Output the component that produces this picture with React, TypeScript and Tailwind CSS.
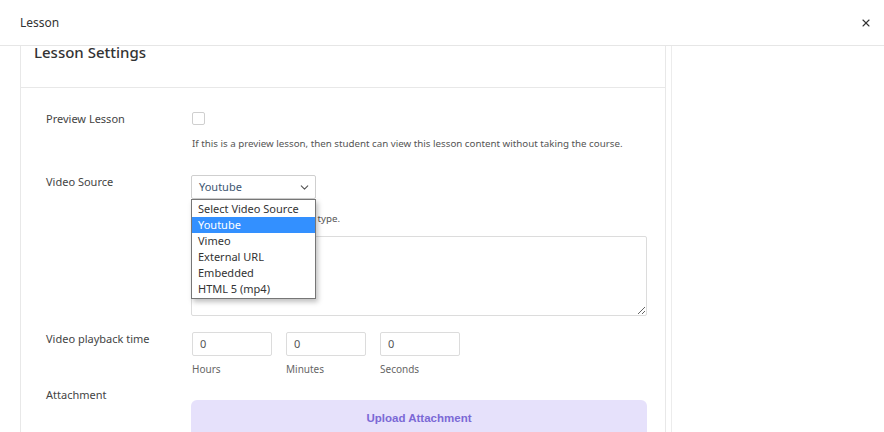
import { X, ChevronDown } from 'lucide-react';

const font = { fontFamily: '"Noto Sans", "Open Sans", sans-serif' };

const options = ['Select Video Source', 'Youtube', 'Vimeo', 'External URL', 'Embedded', 'HTML 5 (mp4)'];

const TimeInput = ({ label }: { label: string }) => (
  <div className="flex flex-col">
    <div className="w-[80px] h-[24px] border border-[#dcdcdc] rounded-[2px] pl-[7px] flex items-center text-[11px] text-[#555]">
      0
    </div>
    <span className="mt-[5px] text-[10px] leading-[16px] text-[#666]">{label}</span>
  </div>
);

const App = () => {
  return (
    <div className="w-[884px] h-[432px] bg-white overflow-hidden flex flex-col" style={font}>
      <div className="h-[46px] shrink-0 border-b border-[#e6e6e6] flex items-center justify-between pl-[20px] pr-[12px]">
        <span className="text-[12px] text-[#333]">Lesson</span>
        <X size={12} strokeWidth={2.2} className="text-[#333]" />
      </div>

      <div className="flex-1 overflow-hidden flex">
        <div className="w-[672px] border-r border-[#ececec] shrink-0">
          <div className="-mt-[30px] ml-[20px] mr-[5px] border border-[#e8e8e8] rounded-[3px]">
            <div className="px-[13px] pt-[28px] pb-[28px] border-b border-[#e8e8e8]">
              <h2 className="text-[15px] leading-[14px] font-medium text-[#333]">Lesson Settings</h2>
            </div>

            <div className="pl-[25px] pr-[18px] pt-[23px]">
              {/* Preview lesson */}
              <div className="flex">
                <div className="w-[146px] text-[11px] leading-[16px] text-[#444]">Preview Lesson</div>
                <div className="flex-1 pt-[1px]">
                  <div className="w-[13px] h-[13px] border border-[#cfcfcf] rounded-[2px]" />
                  <p className="mt-[11px] text-[9.75px] leading-[16px] text-[#555]">
                    If this is a preview lesson, then student can view this lesson content without taking the course.
                  </p>
                </div>
              </div>

              {/* Video source */}
              <div className="flex mt-[22px]">
                <div className="w-[146px] text-[11px] leading-[16px] text-[#444]">Video Source</div>
                <div className="flex-1 pt-[1px]">
                  <div className="relative w-[125px]">
                    <div className="h-[24px] border border-[#cfcfcf] rounded-[2px] flex items-center justify-between pl-[7px] pr-[4px] text-[11px] text-[#3d5671]">
                      Youtube
                      <ChevronDown size={13} strokeWidth={2} className="text-[#555]" />
                    </div>
                    <ul className="absolute left-0 top-[24px] w-[125px] bg-white border border-[#767676] shadow-[2px_3px_5px_rgba(0,0,0,0.25)] py-[1px] z-10">
                      {options.map((o) => (
                        <li
                          key={o}
                          className={
                            o === 'Youtube'
                              ? 'h-[16px] leading-[16px] pl-[6px] text-[11px] bg-[#3390ff] text-white'
                              : 'h-[16px] leading-[16px] pl-[6px] text-[11px] text-[#333]'
                          }
                        >
                          {o}
                        </li>
                      ))}
                    </ul>
                  </div>
                  <p className="mt-[12px] text-[9.75px] leading-[16px] text-[#555]">Select your preferred video type.</p>
                  <textarea
                    className="mt-[9px] block w-[456px] h-[80px] border border-[#dcdcdc] rounded-[2px] outline-none"
                    readOnly
                  />
                </div>
              </div>

              {/* Playback time */}
              <div className="flex mt-[15px]">
                <div className="w-[146px] text-[11px] leading-[16px] text-[#444]">Video playback time</div>
                <div className="flex-1 pt-[1px] flex gap-[14px]">
                  <TimeInput label="Hours" />
                  <TimeInput label="Minutes" />
                  <TimeInput label="Seconds" />
                </div>
              </div>

              {/* Attachment */}
              <div className="flex mt-[10px]">
                <div className="w-[146px] text-[11px] leading-[16px] text-[#444]">Attachment</div>
                <div className="flex-1 pt-[13px]">
                  <button
                    className="w-[456px] h-[38px] rounded-[6px] bg-[#e6e1fb] text-[11.5px] font-bold text-[#7b69d6]"
                    style={{ fontFamily: '"Liberation Sans", Arial, sans-serif' }}
                  >
                    Upload Attachment
                  </button>
                </div>
              </div>
            </div>
          </div>
        </div>
      </div>
    </div>
  );
};

export default App;
